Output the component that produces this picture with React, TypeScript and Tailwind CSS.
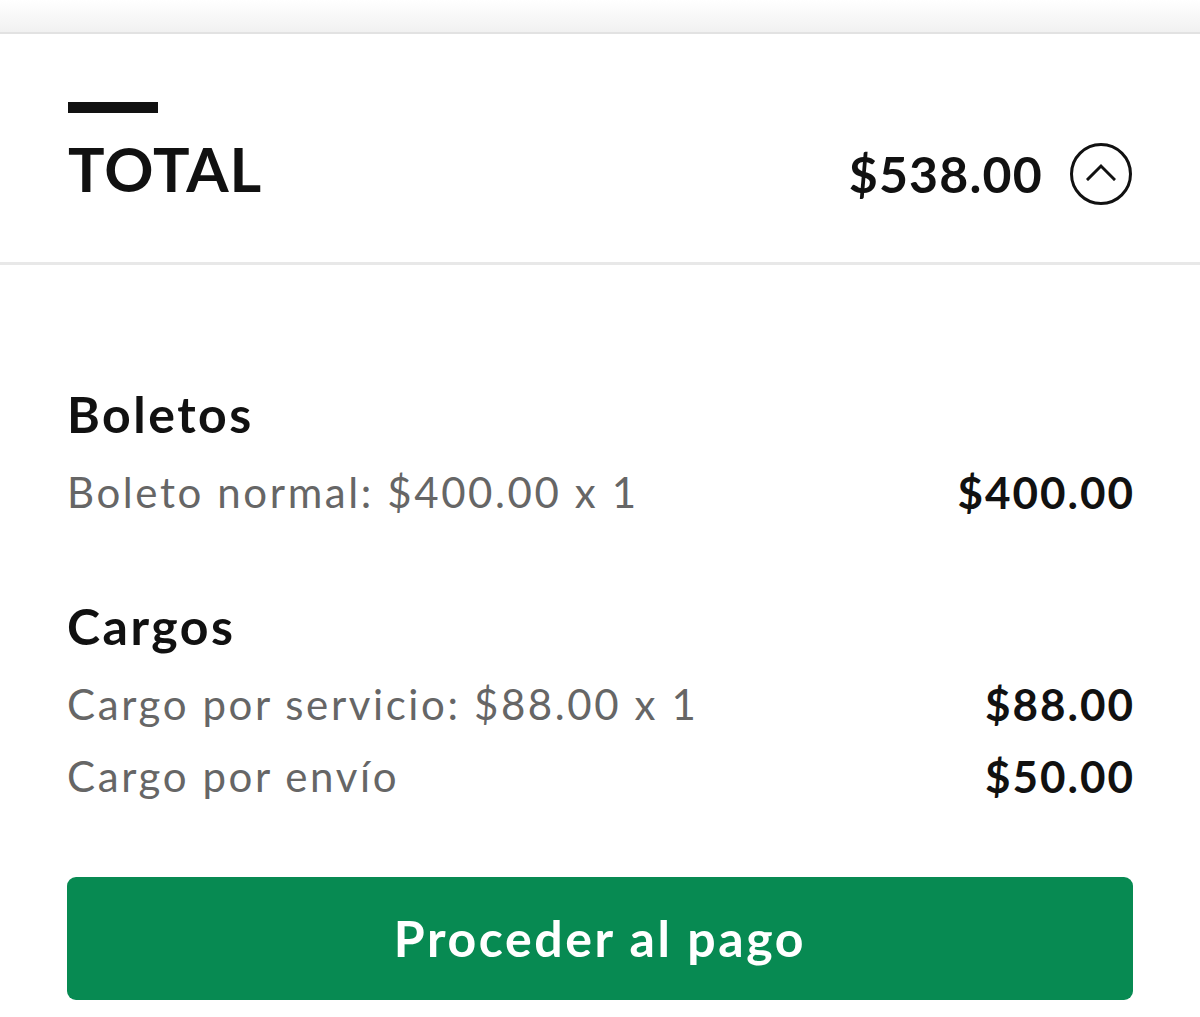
type Line = {
  label: string;
  amount: string;
};

const sections: { title: string; lines: Line[] }[] = [
  {
    title: "Boletos",
    lines: [{ label: "Boleto normal: $400.00 x 1", amount: "$400.00" }],
  },
  {
    title: "Cargos",
    lines: [
      { label: "Cargo por servicio: $88.00 x 1", amount: "$88.00" },
      { label: "Cargo por envío", amount: "$50.00" },
    ],
  },
];

export default function App() {
  return (
    <div className="w-[1200px] h-[1017px] bg-white overflow-hidden font-['Lato',sans-serif] text-[#111]">
      {/* shadow strip above the sheet */}
      <div className="h-[34px] bg-gradient-to-b from-white to-[#f1f1f1] border-b-2 border-[#e2e2e2]" />

      <div className="h-[231px] px-[68px] pt-[68px] border-b-[3px] border-[#e8e8e8]">
        <div className="w-[90px] h-[11px] bg-[#111]" />
        <div className="mt-[25px] flex items-start justify-between">
          <h1 className="text-[61px] leading-[61px] font-bold tracking-[1px]">TOTAL</h1>
          <div className="mt-[5px] flex items-center gap-[27px]">
            <span className="text-[50px] leading-[62px] font-bold tracking-[1.2px]">$538.00</span>
            <button className="w-[62px] h-[62px] rounded-full border-[3px] border-[#111] flex items-center justify-center">
              <svg width="30" height="18" viewBox="0 0 30 18" fill="none" className="-mt-[4px]">
                <polyline
                  points="2,16 15,3 28,16"
                  stroke="#111"
                  strokeWidth="3"
                  strokeLinecap="square"
                  fill="none"
                />
              </svg>
            </button>
          </div>
        </div>
      </div>

      <div className="px-[67px] pt-[119px]">
        {sections.map((section, i) => (
          <div key={section.title} className={i > 0 ? "mt-[68px]" : ""}>
            <h2 className="text-[50px] leading-[60px] font-bold tracking-[2.5px]">{section.title}</h2>
            <div className="mt-[12px]">
              {section.lines.map((line) => (
                <div key={line.label} className="flex items-center justify-between h-[72px]">
                  <span className="text-[42px] text-[#666] tracking-[2.6px]">{line.label}</span>
                  <span className="text-[44px] font-bold tracking-[2px] -mr-[2px]">{line.amount}</span>
                </div>
              ))}
            </div>
          </div>
        ))}

        <button className="mt-[65px] w-full h-[123px] rounded-[9px] bg-[#078a52] text-white text-[50px] font-bold tracking-[2.6px]">
          Proceder al pago
        </button>
      </div>
    </div>
  );
}
